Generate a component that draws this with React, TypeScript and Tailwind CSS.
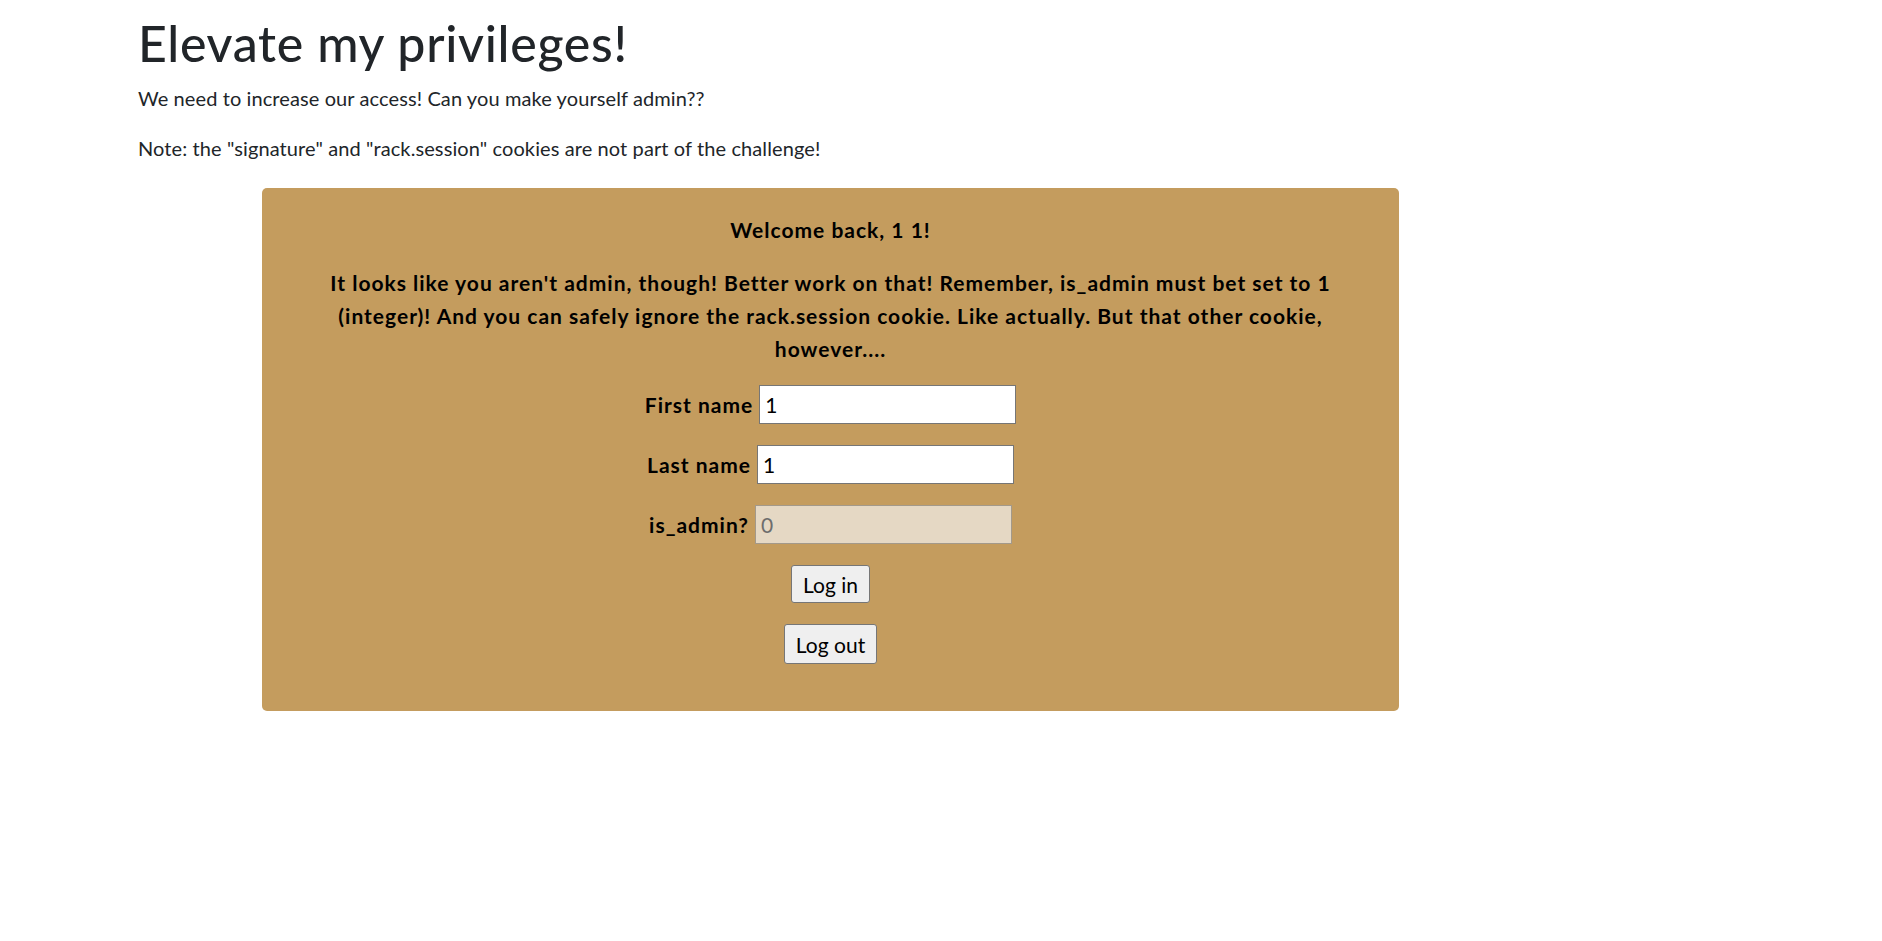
export default function App() {
  return (
    <div className="min-h-screen bg-white pl-[138px] pt-[13px] font-['Lato','Noto_Sans',sans-serif] text-[#212529]">
      <h1 className="text-[50px] font-medium leading-[60px] tracking-[0.7px] mb-[10px]">Elevate my privileges!</h1>
      <p className="text-[20px] leading-[30px] tracking-[0.1px] mb-[20px]">
        We need to increase our access! Can you make yourself admin??
      </p>
      <p className="text-[20px] leading-[30px] tracking-[0.1px]">
        Note: the "signature" and "rack.session" cookies are not part of the challenge!
      </p>

      <div className="ml-[124px] mt-[25px] w-[1137px] h-[523px] rounded-[5px] bg-[#c49c5e] px-[20px] pt-[25px] text-center text-black font-bold text-[21px] leading-[33px] tracking-[1px]">
        <p className="mb-[20px]">Welcome back, 1 1!</p>
        <p className="mb-[19px]">
          It looks like you aren't admin, though! Better work on that! Remember, is_admin must bet set to 1
          <br />
          (integer)! And you can safely ignore the rack.session cookie. Like actually. But that other cookie,
          <br />
          however....
        </p>

        <form className="flex flex-col gap-[20px]" onSubmit={(e) => e.preventDefault()}>
          <div className="flex h-[40px] items-center justify-center gap-[6px]">
            <label htmlFor="first">First name</label>
            <input
              id="first"
              defaultValue="1"
              className="h-[39px] w-[257px] border border-[#767676] bg-white px-[5px] text-[21px] font-normal tracking-normal text-black outline-none"
            />
          </div>
          <div className="flex h-[40px] items-center justify-center gap-[6px]">
            <label htmlFor="last">Last name</label>
            <input
              id="last"
              defaultValue="1"
              className="h-[39px] w-[257px] border border-[#767676] bg-white px-[5px] text-[21px] font-normal tracking-normal text-black outline-none"
            />
          </div>
          <div className="flex h-[40px] items-center justify-center gap-[6px]">
            <label htmlFor="admin">is_admin?</label>
            <input
              id="admin"
              defaultValue="0"
              disabled
              className="h-[39px] w-[257px] border border-[#a3998a] bg-[#e5d8c4] px-[5px] text-[21px] font-normal tracking-normal text-[#6d6d6d]"
            />
          </div>
          <div className="flex h-[40px] items-center justify-center">
            <button className="h-[38px] w-[79px] rounded-[3px] border border-[#767676] bg-[#efefef] text-[21px] font-normal tracking-normal text-black">
              Log in
            </button>
          </div>
          <div className="flex h-[40px] items-center justify-center">
            <button className="h-[40px] w-[93px] rounded-[3px] border border-[#767676] bg-[#efefef] text-[21px] font-normal tracking-normal text-black">
              Log out
            </button>
          </div>
        </form>
      </div>
    </div>
  );
}
